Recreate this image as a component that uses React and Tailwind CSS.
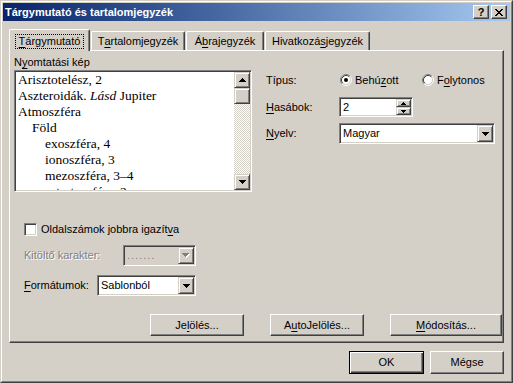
// Classic Windows "Tárgymutató és tartalomjegyzék" dialog

const raised =
  "bg-[#d4d0c8] border border-t-[#d4d0c8] border-l-[#d4d0c8] border-r-[#404040] border-b-[#404040] shadow-[inset_1px_1px_#fff,inset_-1px_-1px_#808080]";
const pushButton =
  "bg-[#d4d0c8] border border-t-white border-l-white border-r-[#404040] border-b-[#404040] shadow-[inset_-1px_-1px_#808080]";
const sunken =
  "border border-t-[#808080] border-l-[#808080] border-r-white border-b-white shadow-[inset_1px_1px_#404040,inset_-1px_-1px_#d4d0c8]";

// underlined mnemonic letter
function U({ children }) {
  return <span className="underline decoration-1 underline-offset-[2px]">{children}</span>;
}

function ArrowDown({ color = "#000" }) {
  return (
    <svg width="7" height="4" viewBox="0 0 7 4">
      <path d="M0 0h7v1H0zM1 1h5v1H1zM2 2h3v1H2zM3 3h1v1H3z" fill={color} />
    </svg>
  );
}

function ArrowUp() {
  return (
    <svg width="7" height="4" viewBox="0 0 7 4">
      <path d="M3 0h1v1H3zM2 1h3v1H2zM1 2h5v1H1zM0 3h7v1H0z" fill="#000" />
    </svg>
  );
}

function SmallArrow({ up }) {
  return (
    <svg width="5" height="3" viewBox="0 0 5 3">
      <path
        d={up ? "M2 0h1v1H2zM1 1h3v1H1zM0 2h5v1H0z" : "M0 0h5v1H0zM1 1h3v1H1zM2 2h1v1H2z"}
        fill="#000"
      />
    </svg>
  );
}

function DisabledArrow() {
  return (
    <svg width="8" height="5" viewBox="0 0 8 5">
      <path d="M1 1h7v1H1zM2 2h5v1H2zM3 3h3v1H3zM4 4h1v1H4z" fill="#fff" />
      <path d="M0 0h7v1H0zM1 1h5v1H1zM2 2h3v1H2zM3 3h1v1H3z" fill="#808080" />
    </svg>
  );
}

function Radio({ checked }) {
  return (
    <svg width="12" height="12" viewBox="0 0 12 12" className="shrink-0">
      <circle cx="6" cy="6" r="4.5" fill="#fff" />
      <path d="M2.11 9.89A5.5 5.5 0 0 1 9.89 2.11" stroke="#808080" fill="none" />
      <path d="M9.89 2.11A5.5 5.5 0 0 1 2.11 9.89" stroke="#fff" fill="none" />
      <path d="M2.82 9.18A4.5 4.5 0 0 1 9.18 2.82" stroke="#404040" fill="none" />
      <path d="M9.18 2.82A4.5 4.5 0 0 1 2.82 9.18" stroke="#d4d0c8" fill="none" />
      {checked && <circle cx="6" cy="6" r="2" fill="#000" />}
    </svg>
  );
}

function Combo({ width, text, disabled }) {
  return (
    <div className={`${sunken} ${width} h-[21px] p-px flex`}>
      <div
        className={`flex-1 flex items-center pl-[2px] ${
          disabled ? "bg-[#d4d0c8] text-[#808080] tracking-[1px]" : "bg-white"
        }`}
      >
        {text}
      </div>
      <div className={`${raised} w-[16px] flex items-center justify-center`}>
        {disabled ? <DisabledArrow /> : <ArrowDown />}
      </div>
    </div>
  );
}

function Tab({ active, width, children }) {
  if (active) {
    return (
      <div
        className={`relative z-10 -mb-px h-[22px] ${width} bg-[#d4d0c8] border-t border-l border-r border-t-white border-l-white border-r-[#404040] shadow-[inset_-1px_0_#808080] rounded-t-[2px] pt-[4px] flex justify-center`}
      >
        <span className="h-[15px] border border-dotted border-black px-[3px]">{children}</span>
      </div>
    );
  }
  return (
    <div
      className={`h-[19px] ${width} border-t border-l border-r border-t-white border-l-white border-r-[#404040] shadow-[inset_-1px_0_#808080] rounded-t-[2px] pt-[3px] flex justify-center`}
    >
      {children}
    </div>
  );
}

function Btn({ width, height = "h-[22px]", children, isDefault }) {
  if (isDefault) {
    return (
      <div
        className={`${width} ${height} bg-[#d4d0c8] border border-black shadow-[inset_1px_1px_#fff,inset_-1px_-1px_#404040,inset_-2px_-2px_#808080] flex items-center justify-center`}
      >
        {children}
      </div>
    );
  }
  return (
    <div className={`${pushButton} ${width} ${height} flex items-center justify-center`}>{children}</div>
  );
}

const indexLines = [
  { indent: "pl-[2px]", text: "Arisztotelész, 2" },
  {
    indent: "pl-[2px]",
    text: (
      <>
        Aszteroidák. <i>Lásd</i> Jupiter
      </>
    ),
  },
  { indent: "pl-[2px]", text: "Atmoszféra" },
  { indent: "pl-[16px]", text: "Föld" },
  { indent: "pl-[29px]", text: "exoszféra, 4" },
  { indent: "pl-[29px]", text: "ionoszféra, 3" },
  { indent: "pl-[29px]", text: "mezoszféra, 3–4" },
  { indent: "pl-[29px]", text: "sztratoszféra, 2" },
];

export default function App() {
  return (
    <div className="w-[513px] h-[383px] bg-[#d4d0c8] font-['Liberation_Sans',Arial,sans-serif] text-[11px] leading-[13px] text-black border border-t-[#d4d0c8] border-l-[#d4d0c8] border-r-[#404040] border-b-[#404040] select-none">
      <div className="h-full border border-t-white border-l-white border-r-[#808080] border-b-[#808080] p-px flex flex-col">
        {/* Title bar */}
        <div className="h-[18px] shrink-0 flex items-center justify-between bg-linear-to-r from-[#0a246a] to-[#a6caf0] pl-[2px] pr-[3px]">
          <span className="font-bold text-white">Tárgymutató és tartalomjegyzék</span>
          <div className="flex gap-[2px]">
            <div className={`${pushButton} w-[16px] h-[14px] flex items-center justify-center font-bold text-[11px] leading-none`}>
              ?
            </div>
            <div className={`${pushButton} w-[16px] h-[14px] flex items-center justify-center`}>
              <svg width="8" height="7" viewBox="0 0 8 7">
                <path
                  d="M0 0h2v1H0zM6 0h2v1H6zM1 1h2v1H1zM5 1h2v1H5zM2 2h4v1H2zM3 3h2v1H3zM2 4h4v1H2zM1 5h2v1H1zM5 5h2v1H5zM0 6h2v1H0zM6 6h2v1H6z"
                  fill="#000"
                />
              </svg>
            </div>
          </div>
        </div>

        {/* Body */}
        <div className="flex-1 flex flex-col pl-[6px]">
          {/* Tabs */}
          <div className="mt-[8px] h-[21px] flex items-end gap-px">
            <Tab active width="w-[81px]">
              <U>T</U>árgymutató
            </Tab>
            <Tab width="w-[94px]">
              T<U>a</U>rtalomjegyzék
            </Tab>
            <Tab width="w-[78px]">
              Á<U>b</U>rajegyzék
            </Tab>
            <Tab width="w-[105px]">
              Hivatkozá<U>s</U>jegyzék
            </Tab>
          </div>

          {/* Tab panel */}
          <div className="w-[495px] h-[293px] border border-t-white border-l-white border-r-[#404040] border-b-[#404040] shadow-[inset_-1px_-1px_#808080] flex flex-col">
            <div className="flex">
              {/* Preview */}
              <div className="pl-[4px] pt-[5px]">
                <div>
                  N<U>y</U>omtatási kép
                </div>
                <div className={`${sunken} mt-px w-[238px] h-[122px] p-px flex`}>
                  <div className="flex-1 bg-white overflow-hidden font-['Liberation_Serif','Times_New_Roman',serif] text-[13.5px] leading-4">
                    {indexLines.map((line, i) => (
                      <div key={i} className={`${line.indent} whitespace-nowrap`}>
                        {line.text}
                      </div>
                    ))}
                  </div>
                  <div className="w-[16px] flex flex-col">
                    <div className={`${raised} h-[16px] flex items-center justify-center`}>
                      <ArrowUp />
                    </div>
                    <div className={`${raised} h-[16px]`} />
                    <div className="flex-1 bg-[image:repeating-conic-gradient(#ffffff_0%_25%,#d4d0c8_0%_50%)] bg-[length:2px_2px]" />
                    <div className={`${raised} h-[16px] flex items-center justify-center`}>
                      <ArrowDown />
                    </div>
                  </div>
                </div>
              </div>

              {/* Options */}
              <div className="ml-[14px] pt-[21px] flex flex-col">
                <div className="h-[16px] flex items-center">
                  <span className="w-[74px]">Típus:</span>
                  <div className="w-[82px] flex items-center gap-[3px]">
                    <Radio checked />
                    <span>
                      Behú<U>z</U>ott
                    </span>
                  </div>
                  <div className="flex items-center gap-[3px]">
                    <Radio />
                    <span>
                      F<U>o</U>lytonos
                    </span>
                  </div>
                </div>
                <div className="mt-[9px] h-[20px] flex items-center">
                  <span className="w-[73px]">
                    <U>H</U>asábok:
                  </span>
                  <div className={`${sunken} w-[74px] h-[20px] p-px flex bg-white`}>
                    <div className="flex-1 flex items-center pl-[2px]">2</div>
                    <div className="w-[15px] flex flex-col">
                      <div className={`${raised} flex-1 flex items-center justify-center`}>
                        <SmallArrow up />
                      </div>
                      <div className={`${raised} flex-1 flex items-center justify-center`}>
                        <SmallArrow />
                      </div>
                    </div>
                  </div>
                </div>
                <div className="mt-[6px] flex items-center">
                  <span className="w-[73px]">
                    <U>N</U>yelv:
                  </span>
                  <Combo width="w-[156px]" text="Magyar" />
                </div>
              </div>
            </div>

            {/* Page numbers / formats */}
            <div className="pl-[14px] mt-[31px] flex flex-col">
              <div className="h-[13px] flex items-center gap-[4px]">
                <div className={`${sunken} w-[13px] h-[13px] bg-white`} />
                <span>
                  Oldalszámok jobbra igazít<U>v</U>a
                </span>
              </div>
              <div className="mt-[9px] flex items-center">
                <span className="w-[99px] text-[#808080] text-shadow-[1px_1px_0_#fff]">Kitöltő karakter:</span>
                <Combo width="w-[73px]" text="......." disabled />
              </div>
              <div className="mt-[9px] flex items-center">
                <span className="w-[73px]">
                  <U>F</U>ormátumok:
                </span>
                <Combo width="w-[99px]" text="Sablonból" />
              </div>
            </div>

            <div className="mt-[18px] pl-[140px] flex gap-[26px]">
              <Btn width="w-[94px]">
                Je<U>l</U>ölés...
              </Btn>
              <Btn width="w-[94px]">
                A<U>u</U>toJelölés...
              </Btn>
              <Btn width="w-[112px]">
                <U>M</U>ódosítás...
              </Btn>
            </div>
          </div>

          {/* Dialog buttons */}
          <div className="mt-[8px] pr-[6px] flex justify-end gap-[6px]">
            <Btn width="w-[75px]" height="h-[23px]" isDefault>
              OK
            </Btn>
            <Btn width="w-[74px]" height="h-[23px]">
              Mégse
            </Btn>
          </div>
        </div>
      </div>
    </div>
  );
}
